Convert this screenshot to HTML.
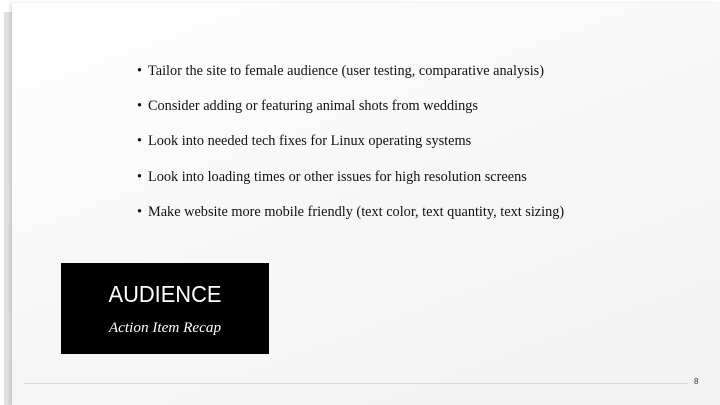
<!DOCTYPE html>
<html><head><meta charset="utf-8"><style>
html,body{margin:0;padding:0;width:720px;height:405px;overflow:hidden;background:#fff;}
.back{position:absolute;left:4px;top:12px;width:716px;height:393px;background:#e0e0e0;}
.page{position:absolute;left:12px;top:3px;width:708px;height:402px;background:linear-gradient(160deg,#ffffff 0%,#f7f7f7 50%,#f3f3f3 100%);box-shadow:-2px 0 3px rgba(0,0,0,0.12);}
.b{position:absolute;left:137px;font-family:"Liberation Serif",serif;font-size:14.3px;color:#111;white-space:nowrap;}
.b span{display:inline-block;width:11px;}
.box{position:absolute;left:61px;top:263px;width:208px;height:91px;background:#000;color:#fff;text-align:center;}
.t{position:absolute;left:0;right:0;top:18px;font-family:"Liberation Sans",sans-serif;font-size:23px;transform:scaleX(0.95);}
.s{position:absolute;left:0;right:0;top:56px;font-family:"Liberation Serif",serif;font-style:italic;font-size:15.2px;}
.line{position:absolute;left:24px;top:383px;width:664px;height:1px;background:#d8d8d8;}
.n{position:absolute;left:694px;top:377px;font-family:"Liberation Sans",sans-serif;font-size:8px;color:#333;}
</style></head><body>
<div class="back"></div>
<div class="page"></div>
<div class="b" style="top:63px"><span>•</span>Tailor the site to female audience (user testing, comparative analysis)</div>
<div class="b" style="top:98px"><span>•</span>Consider adding or featuring animal shots from weddings</div>
<div class="b" style="top:133px"><span>•</span>Look into needed tech fixes for Linux operating systems</div>
<div class="b" style="top:169px"><span>•</span>Look into loading times or other issues for high resolution screens</div>
<div class="b" style="top:204px"><span>•</span>Make website more mobile friendly (text color, text quantity, text sizing)</div>
<div class="box"><div class="t">AUDIENCE</div><div class="s">Action Item Recap</div></div>
<div class="line"></div>
<div class="n">8</div>
</body></html>
